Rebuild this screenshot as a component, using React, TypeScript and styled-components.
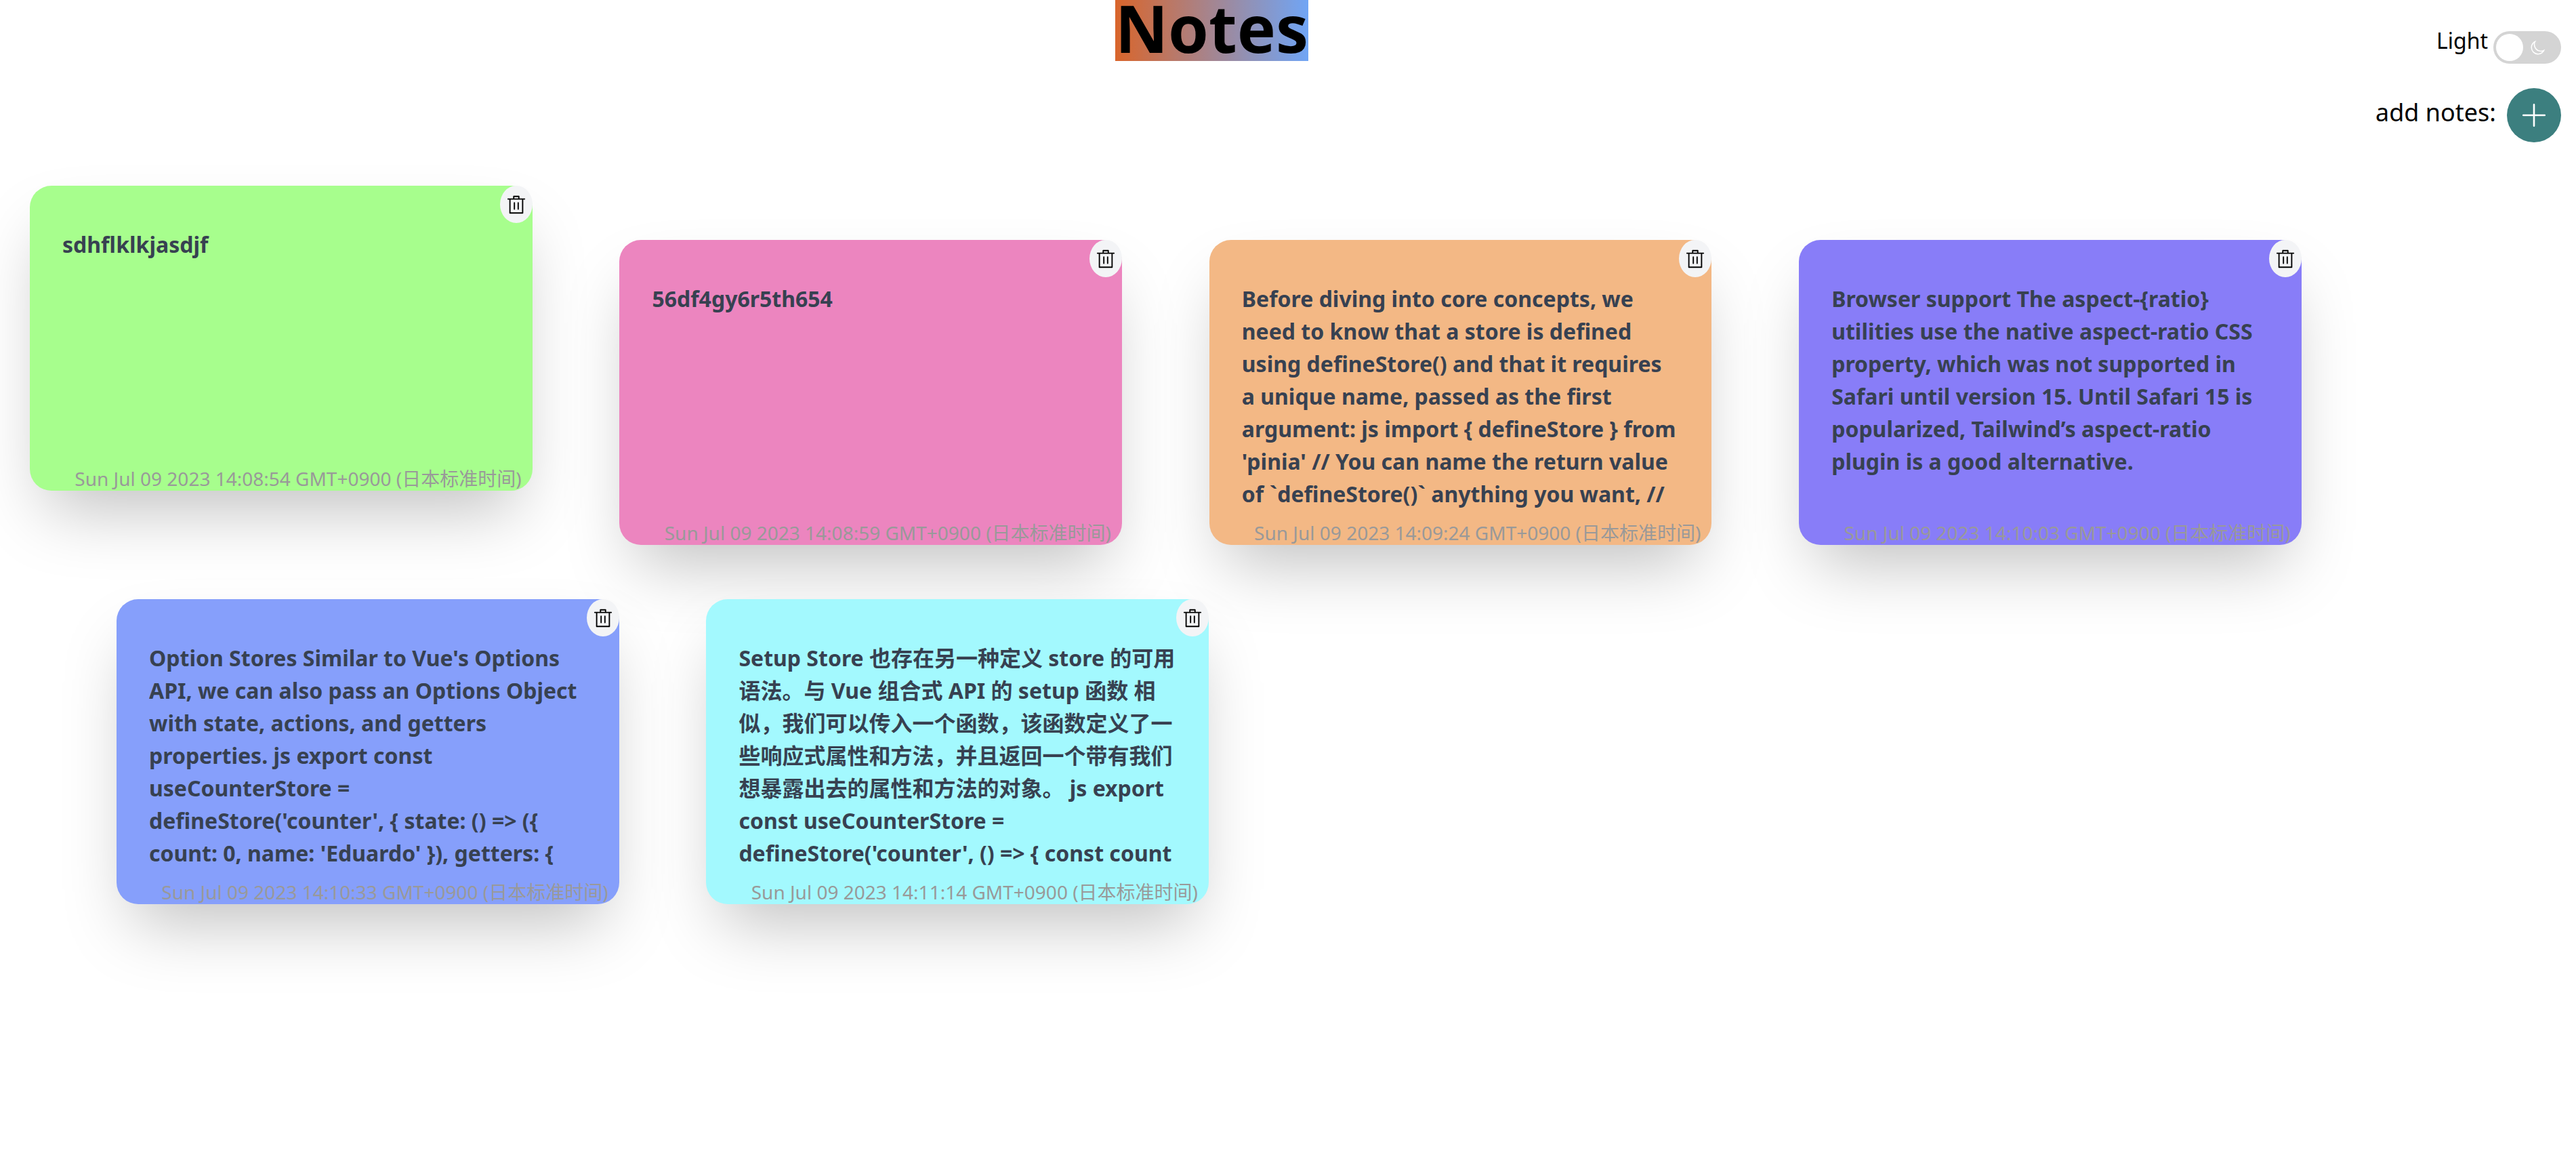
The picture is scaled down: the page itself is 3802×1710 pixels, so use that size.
import styled, { createGlobalStyle } from 'styled-components';

const GlobalStyle = createGlobalStyle`
  html, body {
    margin: 0;
    padding: 0;
    background: #fff;
  }
  body {
    font-family: "Noto Sans", "Noto Sans CJK SC", sans-serif;
    color: #000;
    overflow: hidden;
  }
`;

type Note = { id: number; text: string; date: string; color: string; raised?: boolean };

const rows: { indent: number; notes: Note[] }[] = [
  {
    indent: 44,
    notes: [
      { id: 1, text: 'sdhflklkjasdjf', date: 'Sun Jul 09 2023 14:08:54 GMT+0900 (日本标准时间)', color: '#a7fe8d', raised: true },
      { id: 2, text: '56df4gy6r5th654', date: 'Sun Jul 09 2023 14:08:59 GMT+0900 (日本标准时间)', color: '#ec85bf' },
      {
        id: 3,
        text: "Before diving into core concepts, we need to know that a store is defined using defineStore() and that it requires a unique name, passed as the first argument: js import { defineStore } from 'pinia' // You can name the return value of `defineStore()` anything you want, //",
        date: 'Sun Jul 09 2023 14:09:24 GMT+0900 (日本标准时间)',
        color: '#f3b885',
      },
      {
        id: 4,
        text: 'Browser support The aspect-{ratio} utilities use the native aspect-ratio CSS property, which was not supported in Safari until version 15. Until Safari 15 is popularized, Tailwind’s aspect-ratio plugin is a good alternative.',
        date: 'Sun Jul 09 2023 14:10:03 GMT+0900 (日本标准时间)',
        color: '#887df8',
      },
    ],
  },
  {
    indent: 172,
    notes: [
      {
        id: 5,
        text: "Option Stores Similar to Vue's Options API, we can also pass an Options Object with state, actions, and getters properties. js export const useCounterStore = defineStore('counter', { state: () => ({ count: 0, name: 'Eduardo' }), getters: {",
        date: 'Sun Jul 09 2023 14:10:33 GMT+0900 (日本标准时间)',
        color: '#869ffb',
      },
      {
        id: 6,
        text: "Setup Store 也存在另一种定义 store 的可用语法。与 Vue 组合式 API 的 setup 函数 相似，我们可以传入一个函数，该函数定义了一些响应式属性和方法，并且返回一个带有我们想暴露出去的属性和方法的对象。 js export const useCounterStore = defineStore('counter', () => { const count",
        date: 'Sun Jul 09 2023 14:11:14 GMT+0900 (日本标准时间)',
        color: '#a3f9fe',
      },
    ],
  },
];

const Page = styled.div`
  width: 3802px;
  height: 1710px;
  overflow: hidden;
`;

const Header = styled.header`
  display: flex;
  justify-content: space-between;
  align-items: flex-start;
  height: 354px;
  padding: 0 22px 0 1646px;
  box-sizing: border-box;
`;

const Title = styled.h1`
  margin: 0;
  padding: 0 0 8px;
  font-size: 96px;
  line-height: 82px;
  font-weight: 700;
  background: linear-gradient(to right, #d9652b, #70a5f5);
`;

const Controls = styled.div`
  display: flex;
  flex-direction: column;
  align-items: flex-end;
  gap: 36px;
  padding-top: 46px;
`;

const ControlRow = styled.div<{ $gap: number }>`
  display: flex;
  align-items: center;
  gap: ${(p) => p.$gap}px;
`;

const ThemeLabel = styled.span`
  font-size: 32px;
  line-height: 28px;
  margin-bottom: 20px;
`;

const AddLabel = styled.span`
  font-size: 36px;
  line-height: 48px;
  margin-bottom: 8px;
`;

const Toggle = styled.div`
  display: flex;
  align-items: center;
  justify-content: space-between;
  width: 100px;
  height: 48px;
  padding: 0 22px 0 4px;
  box-sizing: border-box;
  border-radius: 24px;
  background: #d4d4d4;
  color: #fff;
`;

const Knob = styled.span`
  width: 40px;
  height: 40px;
  border-radius: 50%;
  background: #fff;
`;

const AddButton = styled.button`
  display: flex;
  align-items: center;
  justify-content: center;
  width: 80px;
  height: 80px;
  padding: 0;
  border: 0;
  border-radius: 50%;
  background: #3c7f7f;
  color: #fff;
`;

const Board = styled.main`
  display: flex;
  flex-direction: column;
  gap: 80px;
`;

const Row = styled.section<{ $indent: number }>`
  display: flex;
  align-items: flex-start;
  gap: 128.8px;
  padding-left: ${(p) => p.$indent}px;
`;

const Card = styled.article<{ $color: string; $raised?: boolean }>`
  position: relative;
  flex: none;
  width: 741.6px;
  height: 450px;
  padding: 63px 48px 0;
  box-sizing: border-box;
  border-radius: 32px;
  background: ${(p) => p.$color};
  box-shadow: 0 50px 100px -24px rgba(0, 0, 0, 0.25);
  transform: ${(p) => (p.$raised ? 'translateY(-80px)' : 'none')};
`;

const Body = styled.p`
  margin: 0;
  max-height: 336px;
  overflow: hidden;
  font-size: 32px;
  line-height: 48px;
  font-weight: 700;
  color: #374151;
`;

const DateStamp = styled.time`
  position: absolute;
  right: 16px;
  bottom: -2px;
  font-size: 28px;
  line-height: 40px;
  color: #999;
  white-space: nowrap;
`;

const DeleteButton = styled.button`
  position: absolute;
  top: 0;
  right: 0;
  display: flex;
  align-items: center;
  justify-content: center;
  width: 48px;
  height: 55px;
  padding: 0;
  border: 0;
  border-radius: 50%;
  background: #f3f4f6;
  color: #000;
`;

const Icon = ({ d, size }: { d: string; size: number }) => (
  <svg width={size} height={size} viewBox="0 0 1024 1024" fill="currentColor">
    <path d={d} />
  </svg>
);

const trash =
  'M160 256H96a32 32 0 0 1 0-64h256V95.936a32 32 0 0 1 32-32h256a32 32 0 0 1 32 32V192h256a32 32 0 1 1 0 64h-64v672a32 32 0 0 1-32 32H192a32 32 0 0 1-32-32V256zm448-64v-64H416v64h192zM224 896h576V256H224v640zm192-128a32 32 0 0 1-32-32V416a32 32 0 0 1 64 0v320a32 32 0 0 1-32 32zm192 0a32 32 0 0 1-32-32V416a32 32 0 0 1 64 0v320a32 32 0 0 1-32 32z';
const moon =
  'M240.448 240.448a384 384 0 1 0 559.424 525.696 448 448 0 0 1-542.016-542.08 390.592 390.592 0 0 0-17.408 16.384zm181.056 362.048a384 384 0 0 0 525.632 16.384A448 448 0 1 1 405.056 76.8a384 384 0 0 0 16.448 525.696z';
const plus =
  'M480 480V128a32 32 0 0 1 64 0v352h352a32 32 0 0 1 0 64H544v352a32 32 0 0 1-64 0V544H128a32 32 0 0 1 0-64h352z';

export default function App() {
  return (
    <Page>
      <GlobalStyle />
      <Header>
        <Title>Notes</Title>
        <Controls>
          <ControlRow $gap={8}>
            <ThemeLabel>Light</ThemeLabel>
            <Toggle>
              <Knob />
              <Icon d={moon} size={24} />
            </Toggle>
          </ControlRow>
          <ControlRow $gap={16}>
            <AddLabel>add notes:</AddLabel>
            <AddButton>
              <Icon d={plus} size={42} />
            </AddButton>
          </ControlRow>
        </Controls>
      </Header>
      <Board>
        {rows.map((row) => (
          <Row key={row.indent} $indent={row.indent}>
            {row.notes.map((note) => (
              <Card key={note.id} $color={note.color} $raised={note.raised}>
                <DeleteButton>
                  <Icon d={trash} size={30} />
                </DeleteButton>
                <Body>{note.text}</Body>
                <DateStamp>{note.date}</DateStamp>
              </Card>
            ))}
          </Row>
        ))}
      </Board>
    </Page>
  );
}
